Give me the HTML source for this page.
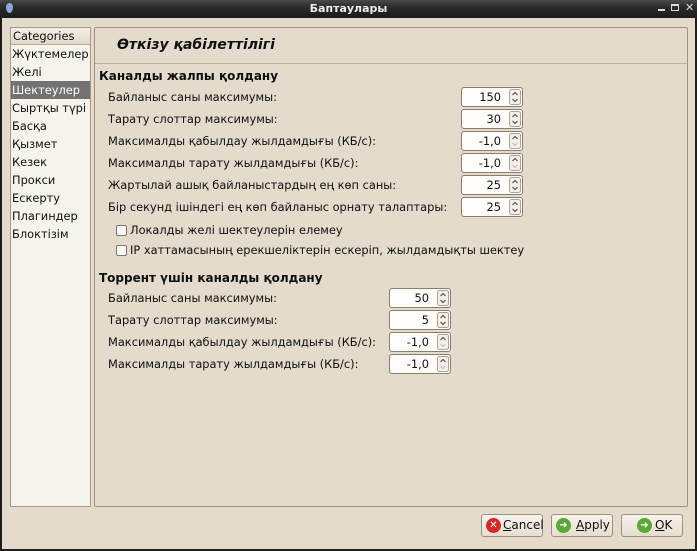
<!DOCTYPE html>
<html><head><meta charset="utf-8"><style>
*{box-sizing:border-box;margin:0;padding:0}
body{width:697px;height:551px;overflow:hidden;background:#1e1e1e;font-family:"DejaVu Sans","Liberation Sans",sans-serif;font-size:11.4px;color:#101010;position:relative}
.win{position:absolute;left:2px;top:18px;width:693px;height:531px;background:#e4dbcc}
.tb{position:absolute;left:0;top:0;width:697px;height:18px;background:linear-gradient(#4a4a4a,#2a2a2a 40%,#1c1c1c);color:#eee;font-weight:bold;font-size:11px;text-align:center;line-height:18px}
.abs{position:absolute;white-space:nowrap}
.side{position:absolute;left:10px;top:27px;width:81px;height:480px;background:#f6f2ec;border:1px solid #a89a88}
.side .h{height:17px;background:linear-gradient(#f4efe6,#e2d8c8);border-bottom:1px solid #b9ab98;padding-left:2px;line-height:16px}
.side div.i{height:18px;line-height:18px;padding-left:1px}
.side .sel{background:#727272;color:#fff}
.main{position:absolute;left:94px;top:27px;width:594px;height:480px;border:1px solid #a89077;border-radius:2px}
.spin{position:absolute;height:20px;border:1px solid #8a7e70;border-radius:3px;background:#fffdf9;text-align:right;padding-right:21px;line-height:18px}
.spin svg{position:absolute;right:1px;top:1px}
.cb{position:absolute;width:11px;height:11px;border:1px solid #777;border-radius:2px;background:#fbf9f5}
.btn{position:absolute;top:514px;height:23px;border:1px solid #a0907c;border-radius:3px;background:linear-gradient(#f7f3ed,#e6ddd0);line-height:21px;font-size:12px}
.ic{position:absolute;left:4px;top:3px;width:15px;height:15px;border-radius:50%;color:#fff;font-size:10px;text-align:center;line-height:15px;font-weight:bold}
</style></head><body>
<div class="tb">Баптаулары</div>
<div class="abs" style="left:6px;top:3px;width:7px;height:10px;border-radius:50% 50% 50% 50%/40% 40% 60% 60%;background:#8aa8d8"></div>
<div class="abs" style="left:658px;top:9px;width:7px;height:2px;background:#ddd"></div>
<div class="abs" style="left:671px;top:4px;width:8px;height:7px;border:1px solid #ddd;border-top-width:2px"></div>
<div class="abs" style="left:685px;top:1px;color:#ddd;font-size:11px;font-weight:bold">✕</div>
<div class="win"></div>
<div class="side"><div class="h">Categories</div>
<div class="i">Жүктемелер</div><div class="i">Желі</div><div class="i sel">Шектеулер</div><div class="i">Сыртқы түрі</div><div class="i">Басқа</div><div class="i">Қызмет</div><div class="i">Кезек</div><div class="i">Прокси</div><div class="i">Ескерту</div><div class="i">Плагиндер</div><div class="i">Блоктізім</div></div>
<div class="main"></div>
<div class="abs" style="left:95px;top:63px;width:592px;height:1px;background:#bfae98"></div>
<div class="abs" style="left:117px;top:37px;font-size:14px;font-weight:bold;font-style:italic">Өткізу қабілеттілігі</div>
<div class="abs" style="left:99px;top:69px;font-weight:bold;font-size:12px">Каналды жалпы қолдану</div>
<div class="abs" style="left:108px;top:90px">Байланыс саны максимумы:</div>
<div class="abs" style="left:108px;top:112px">Тарату слоттар максимумы:</div>
<div class="abs" style="left:108px;top:134px">Максималды қабылдау жылдамдығы (КБ/с):</div>
<div class="abs" style="left:108px;top:156px">Максималды тарату жылдамдығы (КБ/с):</div>
<div class="abs" style="left:108px;top:178px">Жартылай ашық байланыстардың ең көп саны:</div>
<div class="abs" style="left:108px;top:200px">Бір секунд ішіндегі ең көп байланыс орнату талаптары:</div>
<div class="spin" style="left:461px;top:87px;width:62px">150<svg width="12" height="16"><rect x="0.5" y="0.5" width="11" height="15" rx="2" fill="#f3eee6" stroke="#b0a290"/><path d="M3.5 6L6 3.5L8.5 6M3.5 10L6 12.5L8.5 10" fill="none" stroke="#444"/></svg></div>
<div class="spin" style="left:461px;top:109px;width:62px">30<svg width="12" height="16"><rect x="0.5" y="0.5" width="11" height="15" rx="2" fill="#f3eee6" stroke="#b0a290"/><path d="M3.5 6L6 3.5L8.5 6M3.5 10L6 12.5L8.5 10" fill="none" stroke="#444"/></svg></div>
<div class="spin" style="left:461px;top:131px;width:62px">-1,0<svg width="12" height="16"><rect x="0.5" y="0.5" width="11" height="15" rx="2" fill="#f3eee6" stroke="#b0a290"/><path d="M3.5 6L6 3.5L8.5 6" fill="none" stroke="#444"/><path d="M3.5 10L6 12.5L8.5 10" fill="none" stroke="#bbb"/></svg></div>
<div class="spin" style="left:461px;top:153px;width:62px">-1,0<svg width="12" height="16"><rect x="0.5" y="0.5" width="11" height="15" rx="2" fill="#f3eee6" stroke="#b0a290"/><path d="M3.5 6L6 3.5L8.5 6" fill="none" stroke="#444"/><path d="M3.5 10L6 12.5L8.5 10" fill="none" stroke="#bbb"/></svg></div>
<div class="spin" style="left:461px;top:175px;width:62px">25<svg width="12" height="16"><rect x="0.5" y="0.5" width="11" height="15" rx="2" fill="#f3eee6" stroke="#b0a290"/><path d="M3.5 6L6 3.5L8.5 6M3.5 10L6 12.5L8.5 10" fill="none" stroke="#444"/></svg></div>
<div class="spin" style="left:461px;top:197px;width:62px">25<svg width="12" height="16"><rect x="0.5" y="0.5" width="11" height="15" rx="2" fill="#f3eee6" stroke="#b0a290"/><path d="M3.5 6L6 3.5L8.5 6M3.5 10L6 12.5L8.5 10" fill="none" stroke="#444"/></svg></div>
<div class="cb" style="left:116px;top:225px"></div>
<div class="abs" style="left:130px;top:223px">Локалды желі шектеулерін елемеу</div>
<div class="cb" style="left:116px;top:245px"></div>
<div class="abs" style="left:130px;top:243px">IP хаттамасының ерекшеліктерін ескеріп, жылдамдықты шектеу</div>
<div class="abs" style="left:99px;top:271px;font-weight:bold;font-size:12px">Торрент үшін каналды қолдану</div>
<div class="abs" style="left:108px;top:291px">Байланыс саны максимумы:</div>
<div class="abs" style="left:108px;top:313px">Тарату слоттар максимумы:</div>
<div class="abs" style="left:108px;top:335px">Максималды қабылдау жылдамдығы (КБ/с):</div>
<div class="abs" style="left:108px;top:357px">Максималды тарату жылдамдығы (КБ/с):</div>
<div class="spin" style="left:389px;top:288px;width:62px">50<svg width="12" height="16"><rect x="0.5" y="0.5" width="11" height="15" rx="2" fill="#f3eee6" stroke="#b0a290"/><path d="M3.5 6L6 3.5L8.5 6M3.5 10L6 12.5L8.5 10" fill="none" stroke="#444"/></svg></div>
<div class="spin" style="left:389px;top:310px;width:62px">5<svg width="12" height="16"><rect x="0.5" y="0.5" width="11" height="15" rx="2" fill="#f3eee6" stroke="#b0a290"/><path d="M3.5 6L6 3.5L8.5 6M3.5 10L6 12.5L8.5 10" fill="none" stroke="#444"/></svg></div>
<div class="spin" style="left:389px;top:332px;width:62px">-1,0<svg width="12" height="16"><rect x="0.5" y="0.5" width="11" height="15" rx="2" fill="#f3eee6" stroke="#b0a290"/><path d="M3.5 6L6 3.5L8.5 6" fill="none" stroke="#444"/><path d="M3.5 10L6 12.5L8.5 10" fill="none" stroke="#bbb"/></svg></div>
<div class="spin" style="left:389px;top:354px;width:62px">-1,0<svg width="12" height="16"><rect x="0.5" y="0.5" width="11" height="15" rx="2" fill="#f3eee6" stroke="#b0a290"/><path d="M3.5 6L6 3.5L8.5 6" fill="none" stroke="#444"/><path d="M3.5 10L6 12.5L8.5 10" fill="none" stroke="#bbb"/></svg></div>
<div class="btn" style="left:481px;width:62px"><span class="ic" style="background:#d52a2a">✕</span><span style="position:absolute;left:21px"><u>C</u>ancel</span></div>
<div class="btn" style="left:551px;width:62px"><span class="ic" style="background:#5aa836">➜</span><span style="position:absolute;left:24px"><u>A</u>pply</span></div>
<div class="btn" style="left:621px;width:62px"><span class="ic" style="left:15px;background:#5aa836">➜</span><span style="position:absolute;left:33px"><u>O</u>K</span></div>
</body></html>
